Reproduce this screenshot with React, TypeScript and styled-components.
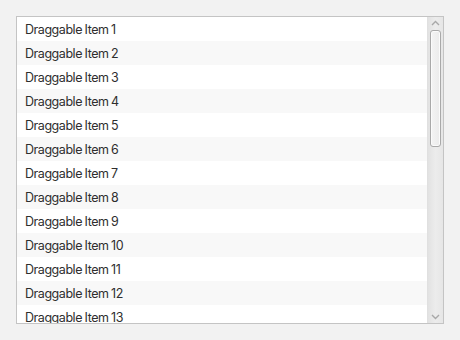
import React from "react";
import styled, { createGlobalStyle } from "styled-components";

const Global = createGlobalStyle`
  html, body { margin: 0; padding: 0; background: #f2f2f2; }
  body { font-family: Inter, "Noto Sans", sans-serif; }
`;

const Page = styled.div`
  padding: 16px;
  width: 460px;
  height: 340px;
  box-sizing: border-box;
`;

const Box = styled.div`
  display: flex;
  width: 428px;
  height: 308px;
  box-sizing: border-box;
  border: 1px solid #c4c4c4;
  background: #ffffff;
`;

const List = styled.div`
  flex: 1;
  overflow: hidden;
  display: flex;
  flex-direction: column;
`;

const Row = styled.div<{ $alt: boolean }>`
  flex: none;
  height: 24px;
  display: flex;
  align-items: center;
  padding-left: 8px;
  background: ${(p) => (p.$alt ? "#f8f8f8" : "#ffffff")};
  color: #2e2e2e;
  font-size: 12.5px;
  letter-spacing: -0.45px;
  word-spacing: -0.5px;
`;

const Scrollbar = styled.div`
  width: 15px;
  flex: none;
  display: flex;
  flex-direction: column;
  align-items: center;
  background: linear-gradient(to right, #e2e2e2, #ececec 50%, #e6e6e6);
  border-left: 1px solid #e0e0e0;
`;

const Arrow = styled.div`
  height: 12px;
  width: 100%;
  display: flex;
  align-items: center;
  justify-content: center;
`;

const Track = styled.div`
  flex: 1;
  width: 100%;
  display: flex;
  justify-content: center;
  padding-top: 1px;
`;

const Thumb = styled.div`
  width: 11px;
  height: 117px;
  box-sizing: border-box;
  border: 1px solid #a9a9a9;
  border-radius: 3px;
  background: linear-gradient(to right, #f4f4f4, #ebebeb);
  box-shadow: inset 0 0 0 1px #fbfbfb;
`;

const ArrowIcon = ({ up }: { up?: boolean }) => (
  <svg width="9" height="6" viewBox="0 0 9 6">
    <path
      d={up ? "M1 5 L4.5 1.5 L8 5" : "M1 1 L4.5 4.5 L8 1"}
      fill="none"
      stroke="#a8a8a8"
      strokeWidth="1.4"
    />
  </svg>
);

export default function App() {
  const items = Array.from({ length: 30 }, (_, i) => i + 1);
  return (
    <>
      <Global />
      <Page>
        <Box>
          <List>
            {items.map((n) => (
              <Row key={n} $alt={n % 2 === 0}>
                Draggable Item {n}
              </Row>
            ))}
          </List>
          <Scrollbar>
            <Arrow>
              <ArrowIcon up />
            </Arrow>
            <Track>
              <Thumb />
            </Track>
            <Arrow>
              <ArrowIcon />
            </Arrow>
          </Scrollbar>
        </Box>
      </Page>
    </>
  );
}
